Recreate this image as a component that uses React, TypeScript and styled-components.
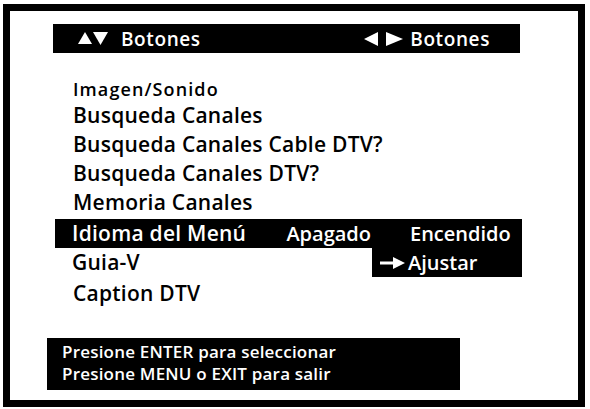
import React from "react";
import styled, { createGlobalStyle } from "styled-components";

const GlobalStyle = createGlobalStyle`
  html, body {
    margin: 0;
    padding: 0;
    background: #ffffff;
  }
  body {
    font-family: "Open Sans", "Noto Sans", sans-serif;
    color: #000;
  }
`;

// outer tv screen frame
const Screen = styled.div`
  box-sizing: border-box;
  margin: 4px 0 0 3px;
  width: 582px;
  height: 403px;
  border: 7px solid #000;
  padding: 13px 0 0 43px;
`;

const TopBar = styled.div`
  box-sizing: border-box;
  width: 467px;
  height: 29px;
  background: #000;
  color: #fff;
  display: flex;
  align-items: center;
  justify-content: space-between;
  padding: 0 30px 0 25px;
  font-size: 19px;
  letter-spacing: 0.6px;
  font-weight: 600;
`;

const Hint = styled.div`
  display: flex;
  align-items: center;
  gap: ${(p: { $gap: number }) => p.$gap}px;
`;

const List = styled.div`
  margin-top: 26px;
  width: 469px;
`;

const Section = styled.div`
  padding-left: 20px;
  font-size: 18px;
  letter-spacing: 1.1px;
  line-height: 20px;
  font-weight: 600;
  margin-bottom: 2px;
`;

const Item = styled.div<{ $gapTop?: number }>`
  padding-left: 20px;
  height: 29px;
  font-size: 21px;
  letter-spacing: 0.25px;
  line-height: 29px;
  font-weight: 600;
  margin-top: ${(p) => p.$gapTop ?? 0}px;
  white-space: nowrap;
`;

const OptionRow = styled.div<{ $active?: boolean; $gapTop?: number }>`
  display: grid;
  grid-template-columns: 317px 150px;
  margin-left: 2px;
  height: ${(p) => (p.$active ? 29 : 28)}px;
  margin-top: ${(p) => p.$gapTop ?? 0}px;
  background: ${(p) => (p.$active ? "#000" : "transparent")};
  color: ${(p) => (p.$active ? "#fff" : "#000")};
  font-size: 20px;
  line-height: 29px;
  font-weight: 600;
  white-space: nowrap;
`;

const RowLabel = styled.div`
  display: flex;
  justify-content: space-between;
  padding-left: 17px;
  padding-right: 1px;
`;

const LabelText = styled.span`
  font-size: 21px;
  letter-spacing: 0.25px;
`;

const Choice = styled.div<{ $boxed?: boolean }>`
  display: flex;
  align-items: center;
  padding-left: ${(p) => (p.$boxed ? 8 : 38)}px;
  gap: 3px;
  background: ${(p) => (p.$boxed ? "#000" : "transparent")};
  color: #fff;
  line-height: 28px;
`;

const Footer = styled.div`
  box-sizing: border-box;
  margin-top: 30px;
  margin-left: -6px;
  width: 413px;
  height: 52px;
  background: #000;
  color: #fff;
  padding: 3px 0 0 15px;
  font-size: 17px;
  letter-spacing: 0.2px;
  line-height: 22px;
  font-weight: 600;
`;

const UpDown = () => (
  <svg width="30" height="13" viewBox="0 0 30 13">
    <polygon points="0,12 7,0 14,12" fill="#fff" />
    <polygon points="15,0 30,0 22.5,13" fill="#fff" />
  </svg>
);

const LeftRight = () => (
  <svg width="39" height="14" viewBox="0 0 39 14">
    <polygon points="0,7 14,0 14,14" fill="#fff" />
    <polygon points="22,0 39,7 22,14" fill="#fff" />
  </svg>
);

const Arrow = () => (
  <svg width="25" height="12" viewBox="0 0 25 12">
    <rect x="0" y="4.5" width="15" height="3" fill="#fff" />
    <polygon points="13,0 25,6 13,12" fill="#fff" />
  </svg>
);

const items = [
  "Busqueda Canales",
  "Busqueda Canales Cable DTV?",
  "Busqueda Canales DTV?",
  "Memoria Canales",
];

export default function App() {
  return (
    <>
      <GlobalStyle />
      <Screen>
        <TopBar>
          <Hint $gap={13}>
            <UpDown />
            <span>Botones</span>
          </Hint>
          <Hint $gap={7}>
            <LeftRight />
            <span>Botones</span>
          </Hint>
        </TopBar>
        <List>
          <Section>Imagen/Sonido</Section>
          {items.map((t) => (
            <Item key={t}>{t}</Item>
          ))}
          <OptionRow $active $gapTop={2}>
            <RowLabel>
              <LabelText>Idioma del Menú</LabelText>
              <span>Apagado</span>
            </RowLabel>
            <Choice>Encendido</Choice>
          </OptionRow>
          <OptionRow>
            <RowLabel>
              <LabelText>Guia-V</LabelText>
            </RowLabel>
            <Choice $boxed>
              <Arrow />
              <span>Ajustar</span>
            </Choice>
          </OptionRow>
          <Item $gapTop={3}>Caption DTV</Item>
        </List>
        <Footer>
          Presione ENTER para seleccionar
          <br />
          Presione MENU o EXIT para salir
        </Footer>
      </Screen>
    </>
  );
}
